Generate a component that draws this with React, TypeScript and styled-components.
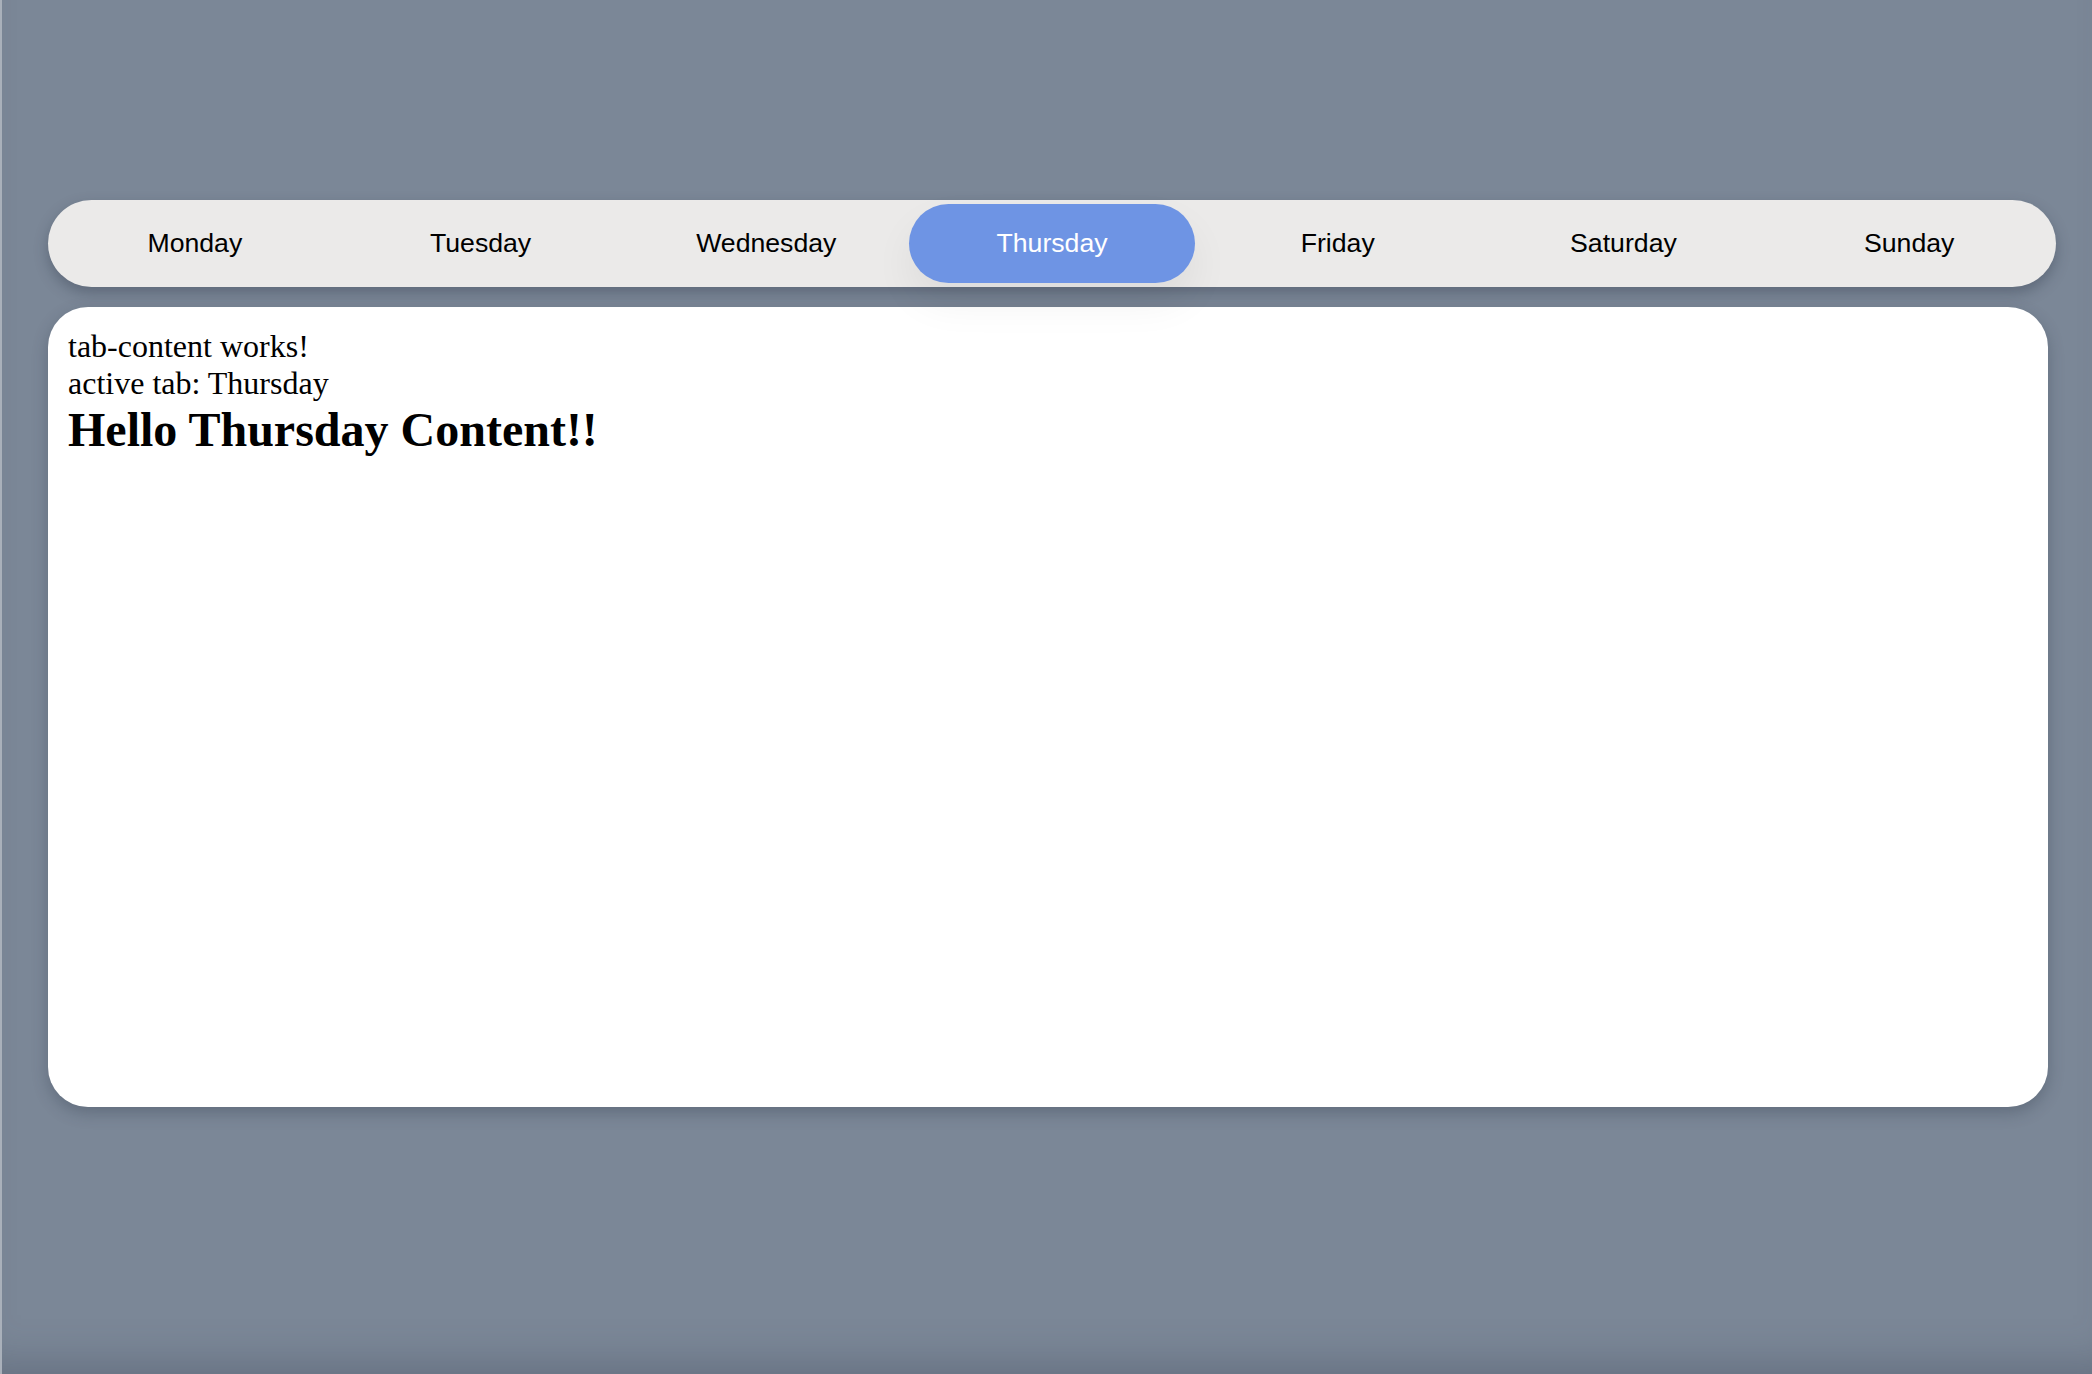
import React, { useState } from 'react';
import styled, { createGlobalStyle } from 'styled-components';

const GlobalStyle = createGlobalStyle`
  html, body {
    margin: 0;
    padding: 0;
    height: 100%;
  }
  body {
    background: #7b8797;
    font-family: "Liberation Serif", "Times New Roman", serif;
  }
`;

const Page = styled.div`
  box-sizing: border-box;
  width: 100%;
  min-height: 100vh;
  padding: 200px 0 0 48px;
  border-left: 2px solid #a9b0ba;
  box-shadow: inset 0 -40px 40px -30px rgba(60, 70, 85, 0.35);
`;

const Wrapper = styled.div`
  width: 2000px;
  margin-left: -2px;
`;

const TabBar = styled.nav`
  position: relative;
  z-index: 1;
  display: flex;
  width: 100%;
  box-sizing: content-box;
  padding: 4px;
  background: #ebeae9;
  border-radius: 44px;
  box-shadow: 0 6px 14px rgba(40, 50, 65, 0.35);
`;

const TabButton = styled.button<{ $active: boolean }>`
  flex: 1;
  height: 79px;
  border: none;
  border-radius: 40px;
  cursor: pointer;
  font-family: "Liberation Sans", Arial, sans-serif;
  font-size: 26.67px;
  color: ${(p) => (p.$active ? '#ffffff' : '#000000')};
  background: ${(p) => (p.$active ? '#6e94e4' : 'transparent')};
  box-shadow: ${(p) => (p.$active ? '0 20px 40px rgba(0, 0, 0, 0.06)' : 'none')};
`;

const Panel = styled.section`
  box-sizing: border-box;
  margin-top: 20px;
  height: 800px;
  padding: 21px 20px 20px;
  background: #ffffff;
  border-radius: 40px;
  box-shadow: 0 6px 16px rgba(40, 50, 65, 0.3);
  font-size: 32px;
  color: #000;
`;

const Line = styled.div``;

const Heading = styled.h2`
  margin: 0;
  font-size: 48px;
  font-weight: bold;
`;

const days = ['Monday', 'Tuesday', 'Wednesday', 'Thursday', 'Friday', 'Saturday', 'Sunday'];

const App: React.FC = () => {
  const [active, setActive] = useState('Thursday');

  return (
    <>
      <GlobalStyle />
      <Page>
        <Wrapper>
          <TabBar>
            {days.map((day) => (
              <TabButton key={day} $active={day === active} onClick={() => setActive(day)}>
                {day}
              </TabButton>
            ))}
          </TabBar>
          <Panel>
            <Line>tab-content works!</Line>
            <Line>active tab: {active}</Line>
            <Heading>Hello {active} Content!!</Heading>
          </Panel>
        </Wrapper>
      </Page>
    </>
  );
};

export default App;
